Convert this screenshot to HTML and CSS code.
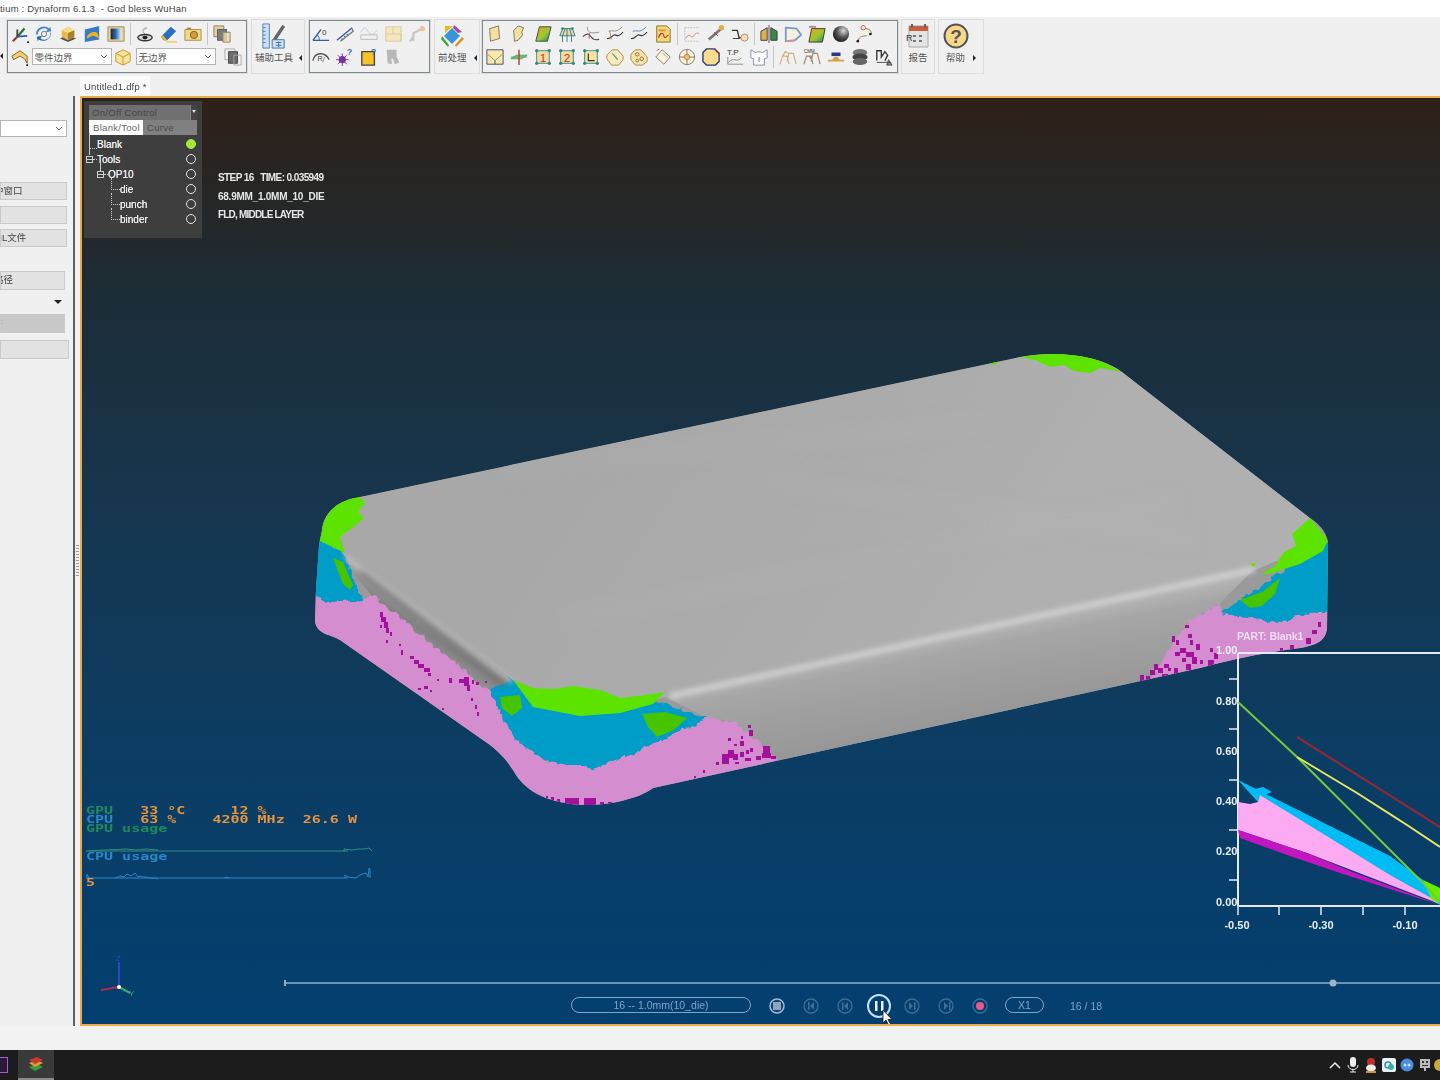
FILE: index.html
```html
<!DOCTYPE html>
<html lang="zh">
<head>
<meta charset="utf-8">
<title>Dynaform 6.1.3</title>
<link rel="stylesheet" href="styles.css">
</head>
<body>
<svg class="defs" width="0" height="0" aria-hidden="true">
<defs>
<linearGradient id="gy" x1="0" y1="0" x2="1" y2="1"><stop offset="0" stop-color="#fff3c0"/><stop offset="1" stop-color="#e8b33c"/></linearGradient>
<linearGradient id="gr" x1="0" y1="0" x2="1" y2="1"><stop offset="0" stop-color="#f5a020"/><stop offset=".55" stop-color="#9ac832"/><stop offset="1" stop-color="#168c50"/></linearGradient>
<linearGradient id="gb" x1="0" y1="0" x2="1" y2="0"><stop offset="0" stop-color="#222"/><stop offset=".5" stop-color="#2a70c0"/><stop offset="1" stop-color="#e8f0f8"/></linearGradient>
<radialGradient id="gs" cx=".65" cy=".3" r=".8"><stop offset="0" stop-color="#ddd"/><stop offset=".5" stop-color="#555"/><stop offset="1" stop-color="#111"/></radialGradient>
<symbol id="axes" viewBox="0 0 20 20"><path d="M7 13 15 4" stroke="#2a6e3c" stroke-width="2.500" fill="none"/><path d="M7 13 2 18" stroke="#b03030" stroke-width="2.500"/><path d="M7 13 18 12" stroke="#2060a8" stroke-width="2"/><path d="M7 13V5" stroke="#444" stroke-width="2"/><path d="M18 18h2v2h-2z" fill="#222"/></symbol>
<symbol id="rot" viewBox="0 0 20 20"><path d="M3 11a7 7 0 0 1 11-6l-2 3 6-1-1-5-1 2A9 9 0 0 0 1 10z" fill="#3f87c6"/><path d="M17 8a7 7 0 0 1-11 7l2-3-6 1 1 5 1-2a9 9 0 0 0 14-7z" fill="#2a6aa8"/><circle cx="10" cy="10" r="3" fill="#e8eef4" stroke="#777"/></symbol>
<symbol id="cube" viewBox="0 0 20 20"><path d="M1 15l9 4 9-4-9-4z" fill="#555"/><path d="M3 6l7-4 7 4v7l-7 4-7-4z" fill="#e8b84a"/><path d="M3 6l7 3 7-3-7-4z" fill="#f7dc8c"/><path d="M10 9v8l7-4V6z" fill="#a9812a"/></symbol>
<symbol id="sheetb" viewBox="0 0 20 20"><path d="M2 5l16-4v15L2 19z" fill="#3a78c8"/><path d="M4 15c1-7 9-9 12-6l2 6-6-3c-3 0-5 2-8 3z" fill="#efb420"/></symbol>
<symbol id="grad" viewBox="0 0 20 20"><path d="M1 2h18v16H1z" fill="#e8d49a" stroke="#9a8a5a"/><path d="M4 4h12v12H4z" fill="url(#gb)"/></symbol>
<symbol id="lamp" viewBox="0 0 20 20"><path d="M10 10C7 8 7 5 10 3" stroke="#999" fill="none"/><path d="M8 6l3-4 2 2z" fill="#bbb"/><ellipse cx="10" cy="14" rx="8" ry="3.500" fill="#ddd" stroke="#333" stroke-width="1.500"/><ellipse cx="10" cy="14" rx="3" ry="2" fill="#222"/></symbol>
<symbol id="eraser" viewBox="0 0 20 20"><path d="M1 13 12 2l6 5-10 10H4z" fill="#2a6fc0"/><path d="M1 13l5 5 2-1-5-6z" fill="#f0c030"/><path d="M7 18h12v1.600H7z" fill="#e8d050"/></symbol>
<symbol id="cam" viewBox="0 0 20 20"><path d="M1 5h18v12H1z" fill="#f2d88a" stroke="#a88a3c"/><path d="M3 3h5v2H3z" fill="#a88a3c"/><circle cx="11" cy="11" r="4" fill="#d0a040" stroke="#7a5a20"/></symbol>
<symbol id="copies" viewBox="0 0 20 20"><path d="M1 1h11v12H1z" fill="#e4d0a0" stroke="#8a7a5a"/><path d="M5 5h10v12H5z" fill="#7c7c7c" stroke="#555"/><path d="M11 8h8v11h-8z" fill="#eeddb0" fill-opacity=".8" stroke="#8a7a5a"/></symbol>
<symbol id="copies2" viewBox="0 0 20 20"><path d="M1 1h11v12H1z" fill="none" stroke="#aaa"/><path d="M5 4h10v13H5z" fill="#6c6c6c" stroke="#444"/><path d="M11 8h8v11h-8z" fill="none" stroke="#aaa"/></symbol>
<symbol id="part" viewBox="0 0 20 20"><path d="M1 9l9-6 8 6v8l-3-5-5-3-7 4z" fill="#f2cf70" stroke="#7a6030"/><path d="M17 18h2v2h-2z" fill="#222"/></symbol>
<symbol id="box" viewBox="0 0 20 20"><path d="M2 6l8-4 8 4v9l-8 4-8-4z" fill="#fbe39c" stroke="#c09530"/><path d="M2 6l8 4 8-4M10 10v9" stroke="#c09530" fill="none"/></symbol>
<symbol id="angle" viewBox="0 0 20 20"><path d="M1 17 10 5M1 17h18" stroke="#2f5ea8" stroke-width="1.500" fill="none"/><path d="M6 11a7 7 0 0 1 2 6" stroke="#2f5ea8" fill="none"/><text x="11" y="11" font-size="9" fill="#333" font-family="Liberation Sans">0</text></symbol>
<symbol id="rule" viewBox="0 0 20 20"><path d="M1 17 18 3" stroke="#2f5ea8" stroke-width="1.500"/><path d="M5 18 19 7l-1-3M6 15l1 1M9 12l1 1M12 10l1 1" stroke="#777" stroke-width="1.500" fill="none"/></symbol>
<symbol id="wave" viewBox="0 0 20 20"><path d="M1 8c3-6 5-6 8-1s6 4 10-1" stroke="#b8c8d8" fill="none"/><path d="M1 11h18v5H1z" fill="none" stroke="#b8b8b8"/></symbol>
<symbol id="panes" viewBox="0 0 20 20"><path d="M2 2h17v16H2z" fill="#f5e6bd" stroke="#d8c8a0"/><path d="M10 2v8H2M10 10h9v8" stroke="#d8c8a0" fill="none"/></symbol>
<symbol id="fax" viewBox="0 0 20 20"><path d="M6 18V9l10-5M6 13 2 18" stroke="#c8c8c0" stroke-width="2.500" fill="none"/><circle cx="16" cy="4" r="3" fill="#f2c0a0"/></symbol>
<symbol id="arc" viewBox="0 0 20 20"><path d="M1 14C3 4 15 4 19 13" fill="none" stroke="#555" stroke-width="1.500"/><text x="6" y="14" font-size="8" fill="#444" font-family="Liberation Sans">R</text><path d="M12 16l2-6" stroke="#888"/></symbol>
<symbol id="star" viewBox="0 0 20 20"><circle cx="7" cy="13" r="4" fill="#7a30a0"/><path d="M7 6v14M0 13h14M2 8l10 10M12 8 2 18" stroke="#7a30a0"/><text x="12" y="8" font-size="10" font-weight="700" fill="#2f6ec0" font-family="Liberation Sans">?</text></symbol>
<symbol id="ysq" viewBox="0 0 20 20"><path d="M2 4h14v15H2z" fill="#f5c228" stroke="#444" stroke-width="1.500"/><text x="12" y="8" font-size="10" font-weight="700" fill="#2f6ec0" font-family="Liberation Sans">?</text></symbol>
<symbol id="gshape" viewBox="0 0 20 20"><path d="M3 2h11v8l3 6-5 2-2-6H8l1 6-5-1z" fill="#b8b8b8"/></symbol>
<symbol id="s1" viewBox="0 0 20 20"><path d="M5 18 4 4l10-3 1 14z" fill="#f3dfa0" stroke="#7a7050"/></symbol>
<symbol id="s2" viewBox="0 0 20 20"><path d="M5 18 4 6l5-5 6 2-2 5 1 3-5 6z" fill="#f3dfa0" stroke="#7a7050"/></symbol>
<symbol id="s3" viewBox="0 0 20 20"><path d="M2 18 6 2h13l-4 16z" fill="url(#gr)" stroke="#345"/></symbol>
<symbol id="mesh" viewBox="0 0 20 20"><path d="M5 4h11l3 8H2z" fill="#e8d8a8" stroke="#2a7a80"/><path d="M5 12v7M10 4v15M15 12v7M8 4 5 12M13 4l2 8" stroke="#2a7a80"/><circle cx="5" cy="4" r="1.500" fill="#2a8a8a"/><circle cx="16" cy="4" r="1.500" fill="#2a8a8a"/></symbol>
<symbol id="c1" viewBox="0 0 20 20"><path d="M6 2c0 6 2 8 13 6" fill="none" stroke="#888"/><path d="M1 13c5-5 7-3 9 0s5 4 9 3" fill="none" stroke="#444" stroke-width="1.300"/><path d="M8 9v6" stroke="#b04040"/></symbol>
<symbol id="c2" viewBox="0 0 20 20"><path d="M3 7c5-2 7 3 15-5" fill="none" stroke="#8a8a8a"/><path d="M1 15c6 1 6-5 9-4s4 2 9-3" fill="none" stroke="#444" stroke-width="1.300"/><path d="M4 6l2 10" stroke="#b09040"/></symbol>
<symbol id="c3" viewBox="0 0 20 20"><path d="M3 7c5-2 7 3 15-5" fill="none" stroke="#5a7aa0"/><path d="M1 15c6 1 6-5 9-4s4 2 9-3" fill="none" stroke="#344" stroke-width="1.300"/></symbol>
<symbol id="doc" viewBox="0 0 20 20"><path d="M3 1h11l4 4v14H3z" fill="#f7d67a" stroke="#8a6a20"/><path d="M5 14c2-6 5-6 6-2s3 1 5-1" stroke="#c03020" fill="none" stroke-width="1.300"/><path d="M5 5h8v2H5z" fill="#e09030"/></symbol>
<symbol id="gr1" viewBox="0 0 20 20"><path d="M2 3h16M2 3v15h16" stroke="#bbb" stroke-dasharray="2 1" fill="none"/><path d="M3 15c4-8 6 0 8-2s4-6 7-3" stroke="#d08060" fill="none"/></symbol>
<symbol id="tool" viewBox="0 0 20 20"><path d="M2 16 16 4" stroke="#777" stroke-width="3"/><circle cx="16" cy="3" r="3" fill="#e0b040"/><path d="M8 8l4 4" stroke="#d02020"/></symbol>
<symbol id="tgt" viewBox="0 0 20 20"><path d="M1 6h6l2 8h8" fill="none" stroke="#333" stroke-width="1.500"/><circle cx="15" cy="14" r="4" fill="#f5deb0" stroke="#a88"/><path d="M2 15h8" stroke="#333"/></symbol>
<symbol id="split" viewBox="0 0 20 20"><path d="M1 7 8 3v14H1z" fill="#e0b040" stroke="#335"/><path d="M12 3l7 4v10h-7z" fill="#3a8a40" stroke="#335"/><path d="M10 0v20" stroke="#444"/></symbol>
<symbol id="outl" viewBox="0 0 20 20"><path d="M2 3l12 1 5 7-7 6-10 1z" fill="#f5f0e0" stroke="#7a9ac8" stroke-width="2"/><path d="M2 18l10-1" stroke="#d89090" stroke-width="2"/></symbol>
<symbol id="gtile" viewBox="0 0 20 20"><path d="M4 4h15l-3 15H1z" fill="url(#gr)" stroke="#333"/><path d="M1 1h8v2H1z" fill="#a88"/></symbol>
<symbol id="sph" viewBox="0 0 20 20"><circle cx="10" cy="10" r="9" fill="url(#gs)"/></symbol>
<symbol id="cn" viewBox="0 0 20 20"><circle cx="8" cy="3" r="2.500" fill="none" stroke="#d06020"/><path d="M10 4c8 0 8 6 5 7M12 12c-6 0-10 2-9 6" fill="none" stroke="#a07030"/><circle cx="2" cy="18" r="1.500" fill="#222"/><circle cx="16" cy="10" r="1.500" fill="#222"/></symbol>
<symbol id="b1" viewBox="0 0 20 20"><path d="M1 2h18v16H1z" fill="#fbe6ae" stroke="#446"/><path d="M2 7l8 7 8-7" stroke="#5a6" fill="none"/><path d="M10 14v4" stroke="#446"/></symbol>
<symbol id="pl" viewBox="0 0 20 20"><path d="M1 12l6-4h12l-6 4z" fill="#d8b060" stroke="#3a6"/><path d="M10 2v17" stroke="#a33" stroke-width="1.500"/><path d="M1 10h18" stroke="#3a6"/></symbol>
<symbol id="n1" viewBox="0 0 20 20"><path d="M3 3h14v14H3z" fill="#f8d8a0" stroke="#2a8a8a"/><text x="10" y="15" text-anchor="middle" font-size="13" fill="#b04020" font-family="Liberation Sans">1</text><circle cx="3" cy="3" r="1.800" fill="#2a8a8a"/><circle cx="17" cy="3" r="1.800" fill="#2a8a8a"/><circle cx="3" cy="17" r="1.800" fill="#2a8a8a"/><circle cx="17" cy="17" r="1.800" fill="#2a8a8a"/></symbol>
<symbol id="n2" viewBox="0 0 20 20"><path d="M3 3h14v14H3z" fill="#f8d8a0" stroke="#2a8a8a"/><text x="10" y="15" text-anchor="middle" font-size="13" fill="#b04020" font-family="Liberation Sans">2</text><circle cx="3" cy="3" r="1.800" fill="#2a8a8a"/><circle cx="17" cy="3" r="1.800" fill="#2a8a8a"/><circle cx="3" cy="17" r="1.800" fill="#2a8a8a"/><circle cx="17" cy="17" r="1.800" fill="#2a8a8a"/></symbol>
<symbol id="sqax" viewBox="0 0 20 20"><path d="M3 3h14v14H3z" fill="#fbe2a0" stroke="#2a8a8a"/><path d="M7 6v8h7" stroke="#333" stroke-width="1.300" fill="none"/><circle cx="3" cy="3" r="1.800" fill="#2a8a8a"/><circle cx="17" cy="3" r="1.800" fill="#2a8a8a"/><circle cx="3" cy="17" r="1.800" fill="#2a8a8a"/><circle cx="17" cy="17" r="1.800" fill="#2a8a8a"/></symbol>
<symbol id="hex" viewBox="0 0 20 20"><path d="M7 2h6l6 7v4l-5 6H6l-5-7V8z" fill="#fbeac0" stroke="#a08a40"/><path d="M7 6l6 7" stroke="#5a8" stroke-width="1.500"/></symbol>
<symbol id="blob" viewBox="0 0 20 20"><path d="M6 2h6l7 8v5l-5 4H6l-5-6V7z" fill="#fbe4a8" stroke="#a08a40"/><circle cx="8" cy="7" r="2" fill="none" stroke="#864"/><circle cx="13" cy="12" r="2" fill="none" stroke="#864"/><circle cx="8" cy="14" r="1.500" fill="none" stroke="#864"/></symbol>
<symbol id="dia" viewBox="0 0 20 20"><path d="M9 2l9 8-7 8-9-8z" fill="#fdf3d8" stroke="#777"/><path d="M10 6l5 5" stroke="#2a7" stroke-dasharray="2 1"/><path d="M3 3l3-2" stroke="#c44"/></symbol>
<symbol id="cir" viewBox="0 0 20 20"><circle cx="10" cy="10" r="8.500" fill="#fdf3d8" stroke="#777"/><circle cx="10" cy="10" r="3" fill="#f0c060" stroke="#a86"/><path d="M2 10h5M13 10h5M10 2v5M10 13v5" stroke="#a55"/></symbol>
<symbol id="rsq" viewBox="0 0 20 20"><path d="M5 1h9l5 5v9l-4 4H5l-4-4V5z" fill="#fbdc8c" stroke="#223a80" stroke-width="1.500"/><path d="M14 1l5 5" stroke="#a03030" stroke-width="1.500"/></symbol>
<symbol id="tp" viewBox="0 0 20 20"><text x="1" y="8" font-size="9" fill="#333" font-family="Liberation Sans">T.P</text><path d="M2 10v8h17M3 16c5-7 9 1 14-5" stroke="#888" fill="none"/></symbol>
<symbol id="shi" viewBox="0 0 20 20"><path d="M1 2l5 3 4-1 4 1 5-3v9l-3 1v7H4v-7l-3-1z" fill="#fff" stroke="#7a8aa8"/><text x="10" y="16" text-anchor="middle" font-size="8" fill="#444" font-family="Liberation Sans">I</text></symbol>
<symbol id="fstr" viewBox="0 0 20 20"><path d="M1 18 4 9h5l2 9M9 15l2-9h5l3 12M4 9l3-5 4 2" fill="none" stroke="#d0b080" stroke-width="1.300"/></symbol>
<symbol id="cmm" viewBox="0 0 20 20"><text x="1" y="5" font-size="5" fill="#333" font-family="Liberation Sans">CMM</text><path d="M1 18 4 9h5l2 9M9 15l2-9h5l3 12M4 9l3 0 4 6" fill="none" stroke="#a08a70" stroke-width="1.300"/></symbol>
<symbol id="pun" viewBox="0 0 20 20"><path d="M5 5h10v4H5z" fill="#2a3a88"/><path d="M1 13h5l2-3h4l2 3h5v2H1z" fill="#d8a040"/></symbol>
<symbol id="disk" viewBox="0 0 20 20"><ellipse cx="10" cy="5" rx="8" ry="4" fill="#777"/><ellipse cx="10" cy="10" rx="8.500" ry="4" fill="#444"/><ellipse cx="10" cy="15" rx="8" ry="4" fill="#666"/></symbol>
<symbol id="fin" viewBox="0 0 20 20"><path d="M2 14V3h5v7l4-6 3 4-3 6" fill="none" stroke="#333" stroke-width="1.500"/><path d="M2 16h16M13 19l2-6 4 6z" fill="#888" stroke="#444"/></symbol>
</defs>
</svg>

<div class="app">
  <header class="title">tium : Dynaform 6.1.3&nbsp; - God bless WuHan</header>

  <div class="toolbar">
    <div class="edge"><span class="arr-l"></span></div>
    <div class="box box1">
      <div class="row">
        <svg class="ic"><use href="#axes"/></svg><svg class="ic"><use href="#rot"/></svg><svg class="ic"><use href="#cube"/></svg><svg class="ic"><use href="#sheetb"/></svg><svg class="ic"><use href="#grad"/></svg>
        <i class="sep"></i>
        <svg class="ic"><use href="#lamp"/></svg><svg class="ic"><use href="#eraser"/></svg><svg class="ic"><use href="#cam"/></svg>
        <i class="sep"></i>
        <svg class="ic"><use href="#copies"/></svg>
      </div>
      <div class="row row-combo">
        <svg class="ic ic-first"><use href="#part"/></svg>
        <div class="combo"><span>零件边界</span><svg class="chev" viewBox="0 0 8 5"><path d="M1 1l3 3 3-3" fill="none" stroke="#666"/></svg></div>
        <svg class="ic ic-mid"><use href="#box"/></svg>
        <div class="combo"><span>无边界</span><svg class="chev" viewBox="0 0 8 5"><path d="M1 1l3 3 3-3" fill="none" stroke="#666"/></svg></div>
        <svg class="ic ic-end"><use href="#copies2"/></svg>
      </div>
    </div>

    <div class="big big-aux">
      <svg class="bigic" viewBox="0 0 26 28"><path d="M1 1h7v26H1z" fill="#cfe0f0" stroke="#4a80b8"/><path d="M1 5h3M1 9h3M1 13h3M1 17h3M1 21h3" stroke="#4a80b8"/><path d="M12 17 22 2l3 2-10 15z" fill="#666"/><path d="M11 18h13v9H11z" fill="#cfe0f0" stroke="#3a70a8"/><path d="M15 21h6M15 24h6M18 20v6" stroke="#3a70a8"/></svg>
      <div class="biglabel"><span>辅助工具</span><span class="arr-l"></span></div>
    </div>

    <div class="box box3">
      <div class="row">
        <svg class="ic"><use href="#angle"/></svg><svg class="ic"><use href="#rule"/></svg><svg class="ic"><use href="#wave"/></svg><svg class="ic"><use href="#panes"/></svg><svg class="ic"><use href="#fax"/></svg>
      </div>
      <div class="row">
        <svg class="ic"><use href="#arc"/></svg><svg class="ic"><use href="#star"/></svg><svg class="ic"><use href="#ysq"/></svg><svg class="ic"><use href="#gshape"/></svg>
      </div>
    </div>

    <div class="big big-pre">
      <svg class="bigic" viewBox="0 0 26 26"><path d="M13 5l8 8-8 8-8-8z" fill="#3a96d8"/><path d="M6 3h8L6 10z" fill="#e0c020"/><path d="M15 2l8 7-4 1-5-5z" fill="#b040a8"/><path d="M3 13l7 9-1 2-7-8z" fill="#38a838"/><path d="M23 14l-7 8 1 2 8-8z" fill="#e09020"/></svg>
      <div class="biglabel"><span>前处理</span><span class="arr-l"></span></div>
    </div>

    <div class="box box5">
      <div class="row">
        <svg class="ic"><use href="#s1"/></svg><svg class="ic"><use href="#s2"/></svg><svg class="ic"><use href="#s3"/></svg><svg class="ic"><use href="#mesh"/></svg><svg class="ic"><use href="#c1"/></svg><svg class="ic"><use href="#c2"/></svg><svg class="ic"><use href="#c3"/></svg><svg class="ic"><use href="#doc"/></svg>
        <i class="sep"></i>
        <svg class="ic"><use href="#gr1"/></svg><svg class="ic"><use href="#tool"/></svg><svg class="ic"><use href="#tgt"/></svg>
        <i class="sep"></i>
        <svg class="ic"><use href="#split"/></svg><svg class="ic"><use href="#outl"/></svg><svg class="ic"><use href="#gtile"/></svg><svg class="ic"><use href="#sph"/></svg><svg class="ic"><use href="#cn"/></svg>
      </div>
      <div class="row">
        <svg class="ic"><use href="#b1"/></svg><svg class="ic"><use href="#pl"/></svg><svg class="ic"><use href="#n1"/></svg><svg class="ic"><use href="#n2"/></svg><svg class="ic"><use href="#sqax"/></svg><svg class="ic"><use href="#hex"/></svg><svg class="ic"><use href="#blob"/></svg><svg class="ic"><use href="#dia"/></svg><svg class="ic"><use href="#cir"/></svg><svg class="ic"><use href="#rsq"/></svg><svg class="ic"><use href="#tp"/></svg><svg class="ic"><use href="#shi"/></svg>
        <i class="sep"></i>
        <svg class="ic"><use href="#fstr"/></svg><svg class="ic"><use href="#cmm"/></svg><svg class="ic"><use href="#pun"/></svg><svg class="ic"><use href="#disk"/></svg><svg class="ic"><use href="#fin"/></svg>
      </div>
    </div>

    <div class="big big-rep">
      <svg class="bigic" viewBox="0 0 24 26"><path d="M3 3h19v21H3z" fill="#e4e4e4" stroke="#aaa"/><path d="M3 3h19v5H3z" fill="#c86040"/><path d="M6 1v4M19 1v4" stroke="#666" stroke-width="2"/><path d="M7 12h3v2H7zM13 12h3v2h-3zM7 17h3v2H7zM13 17h3v2h-3z" fill="#777"/><text x="0" y="18" font-size="9" fill="#333" font-family="Liberation Sans">R</text></svg>
      <div class="biglabel"><span>报告</span></div>
    </div>
    <div class="big big-help">
      <svg class="bigic" viewBox="0 0 26 26"><circle cx="13" cy="13" r="11.500" fill="#f8d78a" stroke="#555" stroke-width="2"/><text x="13" y="20" text-anchor="middle" font-size="19" font-weight="700" fill="#555" font-family="Liberation Sans">?</text></svg>
      <div class="biglabel"><span>帮助</span><span class="arr-r"></span></div>
    </div>
  </div>

  <nav class="tabs"><div class="tab">Untitled1.dfp *</div></nav>

  <main class="main">
    <aside class="side">
      <div class="combo combo-side"><svg class="chev" viewBox="0 0 8 5"><path d="M1 1l3 3 3-3" fill="none" stroke="#666"/></svg></div>
      <div class="btn b1"><span class="cut">中窗口</span></div>
      <div class="btn b2"></div>
      <div class="btn b3"><span class="cut">ML文件</span></div>
      <div class="btn b4"><span class="cut">路径</span></div>
      <div class="drop"><span class="arr-d"></span></div>
      <div class="btn b5"><span class="cut faint">件</span></div>
      <div class="btn b6"></div>
    </aside>
    <div class="split"><i></i></div>

    <section class="view">
      <svg class="scene" viewBox="80 96 1360 930" preserveAspectRatio="none">
        <defs>
          <clipPath id="bodyclip"><path id="bodyp" d="M322 530C324 512 338 500 360 497L1020 357C1055 350 1100 355 1122 372L1310 518C1322 526 1329 535 1328 548L1327 628C1326 640 1318 645 1300 648C1270 652 1235 658 1200 668L653 788C640 798 610 806 580 805C550 802 532 795 518 778C510 765 505 757 490 745L340 640C330 634 318 635 315 622L316 590L319 545Z"/></clipPath>
          <filter id="jag" x="-5%" y="-5%" width="110%" height="110%"><feTurbulence type="fractalNoise" baseFrequency=".14" numOctaves="2" seed="4"/><feDisplacementMap in="SourceGraphic" scale="9" xChannelSelector="R" yChannelSelector="G"/></filter>
          <filter id="soft"><feGaussianBlur stdDeviation="2.500"/></filter>
          <filter id="soft2"><feGaussianBlur stdDeviation="6"/></filter>
          <linearGradient id="front" gradientUnits="userSpaceOnUse" x1="900" y1="640" x2="918" y2="730"><stop offset="0" stop-color="#b8b8b8"/><stop offset=".25" stop-color="#a6a6a6"/><stop offset="1" stop-color="#979797"/></linearGradient>
          <linearGradient id="top" gradientUnits="userSpaceOnUse" x1="600" y1="400" x2="950" y2="640"><stop offset="0" stop-color="#a8a8a8"/><stop offset=".7" stop-color="#acacac"/><stop offset="1" stop-color="#b0b0b0"/></linearGradient>
          <linearGradient id="lside" gradientUnits="userSpaceOnUse" x1="440" y1="620" x2="420" y2="650"><stop offset="0" stop-color="#adadad"/><stop offset=".5" stop-color="#828282"/><stop offset="1" stop-color="#939393"/></linearGradient>
        </defs>

        <g clip-path="url(#bodyclip)">
          <rect x="300" y="340" width="1040" height="480" fill="#9a9a9a"/>
          <path d="M665 697 1255 568 1220 603 1187 623 1143 690 778 762 735 722 708 718Z" fill="url(#front)"/>
          <path d="M343 553 513 680 490 695 373 597 355 575Z" fill="url(#lside)"/>
          <path d="M310 585 330 603 363 600 373 595 490 692 513 737 543 760 593 770 633 753 683 730 708 718 735 722 778 760 670 830 570 840 470 800 295 660Z" fill="#d48ed0" filter="url(#jag)"/>
          <path d="M1130 710 1187 623 1220 603 1222 613 1240 617 1280 623 1293 617 1345 606 1345 665 1200 700Z" fill="#d48ed0" filter="url(#jag)"/>
          <path d="M305 530 343 553 363 600 330 603 302 590Z" fill="#009dc8" filter="url(#jag)"/>
          <path d="M490 692 513 675 653 700 708 718 683 730 633 753 593 770 543 760 513 737Z" fill="#009dc8" filter="url(#jag)"/>
          <path d="M1222 613 1240 600 1277 575 1323 545 1345 535 1345 606 1293 617 1280 623 1240 617Z" fill="#009dc8" filter="url(#jag)"/>
          <path d="M333 558 343 562 353 585 350 590 343 584Z" fill="#46c400"/>
          <path d="M500 697 520 695 522 708 512 716 502 708Z" fill="#46c400"/>
          <path d="M642 714 665 712 687 718 674 730 657 737 648 727Z" fill="#46c400"/>
          <path d="M1280 578 1262 592 1240 600 1250 608 1262 606 1275 594Z" fill="#46c400"/>

          <path d="M322 530C324 512 338 500 360 497L1020 357C1055 350 1100 355 1122 372L1310 518 1328 540 1255 570 665 697C620 712 560 712 513 680L343 553Z" fill="url(#top)"/>
          <path d="M670 696 1255 569" stroke="#cfcfcf" stroke-width="6" filter="url(#soft)"/>
          <path d="M345 556 512 682" stroke="#bdbdbd" stroke-width="4" filter="url(#soft)"/>
          <path d="M360 572 505 685" stroke="#707070" stroke-width="8" filter="url(#soft)" opacity=".45"/>
          <path d="M500 470 1000 420M560 620 1180 500M760 480 1200 540" stroke="#bbb" stroke-width="26" opacity=".1" filter="url(#soft2)"/>

          <path d="M318 540 322 530C324 512 338 500 360 497L365 503 358 512 364 518 352 528 340 537 345 553Z" fill="#5ce400"/>
          <path d="M513 680 533 688 555 689 573 686 600 690 620 698 645 695 665 692 653 704 620 713 580 716 533 707Z" fill="#5ce400"/>
          <path d="M1262 574 1275 566 1284 552 1296 546 1292 534 1310 518 1328 540 1323 551 1300 564 1268 574Z" fill="#5ce400"/>
          <path d="M1020 357 1060 352 1095 358 1122 372 1100 368 1090 373 1074 371 1064 365 1050 367 1035 360Z" fill="#5ce400"/>
          <path d="M985 362 1000 360 995 365Z" fill="#5ce400"/>
          <path d="M1250 564 1256 563 1254 567Z" fill="#5ce400"/>

          <path fill="#a3109c" d="M380 612h3v5h-3zM381 617h5v5h-5zM384 622h4v6h-4zM386 628h3v5h-3zM390 632h2v4h-2zM380 625h2v3h-2zM386 640h2v3h-2zM399 644h2v2h-2zM401 650h2v5h-2zM410 656h4v3h-4zM414 660h5v4h-5zM418 664h6v4h-6zM424 668h6v4h-6zM428 673h3v3h-3zM437 679h2v2h-2zM449 678h3v5h-3zM459 679h5v4h-5zM464 677h5v9h-5zM467 685h3v6h-3zM472 680h2v4h-2zM476 682h3v3h-3zM485 681h2v2h-2zM418 688h3v2h-3zM424 686h4v3h-4zM430 690h2v2h-2zM471 698h2v3h-2zM475 705h2v4h-2zM477 712h2v4h-2zM442 708h2v2h-2z"/>
          <path fill="#a3109c" d="M551 797h3v3h-3zM557 799h3v5h-3zM565 798h14v8h-14zM584 798h12v8h-12zM600 802h4v3h-4zM608 802h4v3h-4zM546 796h2v2h-2zM728 738h3v3h-3zM748 725h3v3h-3zM749 730h4v6h-4zM741 736h2v3h-2zM740 741h4v5h-4zM734 744h3v2h-3zM722 754h7v10h-7zM728 750h6v8h-6zM733 754h5v6h-5zM740 752h4v5h-4zM746 750h3v4h-3zM750 748h3v4h-3zM763 746h7v8h-7zM762 753h9v5h-9zM756 756h5v4h-5zM745 758h6v3h-6zM735 762h4v2h-4zM771 756h5v3h-5zM716 762h3v3h-3zM703 770h2v3h-2zM694 776h2v2h-2z"/>
          <path fill="#a3109c" d="M1185 625h4v3h-4zM1172 636h3v6h-3zM1176 640h3v5h-3zM1188 634h4v4h-4zM1190 640h3v5h-3zM1196 644h4v6h-4zM1180 648h6v5h-6zM1186 652h8v5h-8zM1192 657h5v7h-5zM1175 652h5v4h-5zM1182 658h4v4h-4zM1186 664h5v6h-5zM1210 648h3v4h-3zM1214 653h4v6h-4zM1200 660h3v4h-3zM1208 660h6v6h-6zM1154 664h4v6h-4zM1150 670h5v5h-5zM1146 676h4v5h-4zM1158 668h5v5h-5zM1164 664h5v4h-5zM1168 668h3v3h-3zM1174 668h4v6h-4zM1162 674h6v3h-6zM1318 622h3v5h-3zM1312 630h5v4h-5zM1306 638h5v6h-5zM1290 645h4v4h-4zM1280 648h3v3h-3z"/>
          <path fill="#a3109c" d="M1140 675h4v6h-4z"/>
        </g>

        <g class="hudlines">
          <path d="M86 851h262" stroke="#2d8f7a" stroke-width="1" fill="none"/>
          <path d="M88 851l8-.5 8-.5 12-.5 10-.5 10 1 10-1 12 1M344 852v-3l8 1 6-1 6 0 5-1 3 3" stroke="#2d8f7a" stroke-width="1" fill="none"/>
          <path d="M86 878h262" stroke="#2a87c8" stroke-width="1" fill="none"/>
          <path d="M87 878v-4l2 4M115 878l5-2 4 1 3-3 4 2 4-3 3 4 3-1 2 1 3 0 4 1 4 0 4 1M224 878l3-1 2 1M345 878v-3l3 2 8 1 4-3 6-2 2 4 1-9 1 1v9" stroke="#2a87c8" stroke-width="1" fill="none"/>
        </g>

        <g class="triad">
          <path d="M119 987V962" stroke="#2a48c0" stroke-width="2"/>
          <path d="M119 987 101 990" stroke="#b02c4c" stroke-width="2"/>
          <path d="M119 987 130 993" stroke="#2fb06a" stroke-width="2"/>
          <circle cx="119" cy="987" r="2" fill="#fff"/>
          <text x="116" y="961" font-size="8" fill="#2a48c0" font-family="Liberation Sans">Z</text>
          <text x="129" y="996" font-size="8" fill="#2fb06a" font-family="Liberation Sans">Y</text>
        </g>

        <g class="chart">
          <path d="M1238 653H1440M1238 653V906M1238 906H1440" stroke="#e8e8f0" stroke-width="2" fill="none"/>
          <path d="M1229 679h9M1229 729h9M1229 780h9M1229 830h9M1229 880h9" stroke="#e8e8f0" stroke-width="1.500"/>
          <path d="M1238 906v9M1279 906v9M1321 906v9M1363 906v9M1405 906v9" stroke="#e8e8f0" stroke-width="1.500"/>
          <path d="M1238 780 1258 790 1390 856 1423 880 1440 898 1440 905 1300 830 1258 802Z" fill="#00bcf5"/>
          <path d="M1255 789 1263 787 1272 792 1262 796Z" fill="#00bcf5"/>
          <path d="M1238 802 1250 804 1258 802 1260 795 1390 875 1433 899 1440 904 1307 853 1238 830Z" fill="#fcaaf2"/>
          <path d="M1238 830 1307 853 1350 871 1440 905 1340 873 1290 856 1240 838Z" fill="#c416c0"/>
          <path d="M1423 880 1440 888V903L1432 900Z" fill="#66f000"/>
          <path d="M1238 702 1297 757 1423 883 1440 902" stroke="#74c93c" stroke-width="2" fill="none"/>
          <path d="M1297 757 1357 793 1407 825 1440 847" stroke="#e8e860" stroke-width="2" fill="none"/>
          <path d="M1297 737 1440 827" stroke="#8a2a3a" stroke-width="2.200" fill="none"/>
        </g>

        <g class="ctrl">
          <path d="M285 983H1440" stroke="#8fb0c8" stroke-width="1.500"/>
          <path d="M285 980v6" stroke="#8fb0c8" stroke-width="2"/>
          <circle cx="1333" cy="983" r="3.500" fill="#9ab4c8"/>
          <circle cx="777" cy="1006" r="7" fill="#0a4678" stroke="#a0bcd4" stroke-width="1.500"/><rect x="773" y="1002" width="8" height="8" fill="#8ea4b8"/>
          <g fill="none" stroke="#3d6f96" stroke-width="1.300">
            <circle cx="811" cy="1006" r="7"/><circle cx="845" cy="1006" r="7"/><circle cx="912" cy="1006" r="7"/><circle cx="946" cy="1006" r="7"/><circle cx="980" cy="1006" r="7"/>
          </g>
          <path d="M808 1002h1.500v8H808zM814 1002v8l-4-4zM848 1002v8l-4-4zM842 1002h1.500v8H842zM909 1002v8l4-4zM914 1002h1.500v8H914zM944 1002v8l4-4zM949 1002h1.500v8H949z" fill="#3d6f96"/>
          <circle cx="980" cy="1006" r="4" fill="#e85c8c"/>
          <circle cx="879" cy="1006" r="11" fill="none" stroke="#c8e0f4" stroke-width="2"/>
          <path d="M875 1001h2.500v10H875zM881 1001h2.500v10H881z" fill="#e8f0f8"/>
          <path d="M883 1010v13l3-3 2.500 5 2-1-2.500-4.500h4z" fill="#fff" stroke="#111" stroke-width=".8"/>
        </g>
      </svg>

      <div class="tree">
        <div class="onoff"><span>On/Off Control</span><b></b></div>
        <div class="ttabs"><span class="on">Blank/Tool</span><span class="off">Curve</span></div>
        <ul class="rows">
          <li class="l0"><span>Blank</span><i class="dot lit"></i></li>
          <li class="l0"><em></em><span>Tools</span><i class="dot"></i></li>
          <li class="l1"><em></em><span>OP10</span><i class="dot"></i></li>
          <li class="l2"><span>die</span><i class="dot"></i></li>
          <li class="l2"><span>punch</span><i class="dot"></i></li>
          <li class="l2"><span>binder</span><i class="dot"></i></li>
        </ul>
      </div>

      <div class="info">
        <p>STEP 16 &nbsp; TIME: 0.035949</p>
        <p>68.9MM_1.0MM_10_DIE</p>
        <p>FLD, MIDDLE LAYER</p>
      </div>

      <div class="part">PART: Blank1</div>
      <span class="yl y100">1.00</span><span class="yl y80">0.80</span><span class="yl y60">0.60</span><span class="yl y40">0.40</span><span class="yl y20">0.20</span><span class="yl y0">0.00</span>
      <span class="xl x50">-0.50</span><span class="xl x30">-0.30</span><span class="xl x10">-0.10</span>

      <pre class="hud"><span class="g">GPU</span><span class="o">   33 °C     12 %</span>
<span class="b">CPU</span><span class="o">   63 %    4200 MHz  26.6 W</span>
<span class="g">GPU usage</span></pre>
      <pre class="hud hud2"><span class="b">CPU usage</span></pre>
      <pre class="hud hud3"><span class="o">5</span></pre>

      <div class="pill pill-step">16 -- 1.0mm(10_die)</div>
      <div class="pill pill-speed">X1</div>
      <div class="count">16 / 18</div>
    </section>
  </main>

  <div class="status"></div>

  <footer class="taskbar">
    <div class="tb-app"></div>
    <div class="tb-active">
      <svg viewBox="0 0 18 18" width="18" height="18"><path d="M2 12l8-3 6 3-8 4z" fill="#3a9a48"/><path d="M2 8l8-3 6 3-8 4z" fill="#d8a030"/><path d="M2 5l8-3 6 3-8 4z" fill="#c83a30"/></svg>
    </div>
    <div class="tray">
      <svg class="t-ch" viewBox="0 0 12 8" height="8"><path d="M1 7l5-5 5 5" fill="none" stroke="#eee" stroke-width="1.500"/></svg>
      <svg viewBox="0 0 12 16" height="16"><rect x="3" y="0" width="6" height="10" rx="3" fill="#eee"/><path d="M1 8c0 6 10 6 10 0M6 12v3M3 15h6" stroke="#eee" fill="none"/></svg>
      <svg viewBox="0 0 14 16" height="16"><ellipse cx="7" cy="5" rx="4" ry="4" fill="#c03028"/><ellipse cx="7" cy="11" rx="5" ry="3.500" fill="#eee"/><path d="M2 14h10v2H2z" fill="#d89030"/></svg>
      <svg viewBox="0 0 14 14" height="14"><rect width="14" height="14" rx="2" fill="#e8f4f8"/><circle cx="6" cy="7" r="3" fill="none" stroke="#3a8aa8" stroke-width="1.500"/><circle cx="9" cy="9" r="3" fill="#3ab0a0"/></svg>
      <svg viewBox="0 0 14 14" height="14"><circle cx="7" cy="7" r="6.500" fill="#4a8ce0"/><circle cx="5" cy="7" r="1.500" fill="#c8e0f8"/><circle cx="9" cy="7" r="1.500" fill="#c8e0f8"/></svg>
      <svg viewBox="0 0 12 14" height="14"><path d="M1 1h10v9H7v3H5v-3H1z" fill="#bbb"/><path d="M3 3h2v2H3zM7 3h2v2H7zM3 7h6v1H3z" fill="#333"/></svg>
      <span class="tray-end"></span>
    </div>
  </footer>
</div>
</body>
</html>
```
FILE: styles.css
```css
* { box-sizing: border-box; }
html, body { margin: 0; padding: 0; height: 100%; overflow: hidden; background: #f0f0f0; }
body { font-family: "Liberation Sans", "Noto Sans CJK SC", sans-serif; color: #333; }
.defs { position: absolute; }
.app { display: flex; flex-direction: column; width: 1440px; height: 1080px; overflow: hidden; filter: blur(.35px); }

.title { height: 17px; background: #fff; font-size: 9.5px; line-height: 17px; color: #444; letter-spacing: .2px; white-space: nowrap; }

.toolbar { height: 59px; background: #f0f0f0; display: flex; align-items: center; }
.edge { width: 7px; height: 52px; display: flex; align-items: flex-end; padding-bottom: 14px; }
.arr-l { width: 0; height: 0; border: 3px solid transparent; border-left: 0; border-right: 3px solid #222; display: inline-block; flex: none; }
.arr-r { width: 0; height: 0; border: 3px solid transparent; border-right: 0; border-left: 3px solid #222; display: inline-block; flex: none; }
.arr-d { width: 0; height: 0; border: 4px solid transparent; border-bottom: 0; border-top: 4px solid #222; display: inline-block; }

.box { height: 53px; border: 1.5px solid #7f8a90; display: flex; flex-direction: column; gap: 1px; padding-top: 1.5px; background: #f0f0f0; box-shadow: 0 0 0 1px #dcdcdc; }
.row { display: flex; align-items: center; gap: 6px; height: 22px; }
.ic { width: 18px; height: 18px; flex: none; display: block; }
.sep { width: 1px; height: 22px; background: #c4c4c4; flex: none; display: block; margin: 0 -1px; }
.box1 { width: 240px; padding-left: 2.5px; }
.box3 { width: 121px; margin-left: 4px; padding-left: 1.5px; }
.box5 { width: 416px; margin-left: 2px; padding-left: 2.5px; }
.row-combo { gap: 2px; }
.ic-first { margin-right: 1px; }
.ic-mid { margin-right: 2px; }
.ic-end { margin-left: 6px; }
.combo { width: 80px; height: 17px; background: #fff; border: 1px solid #b4b4b4; display: flex; align-items: center; justify-content: space-between; font-size: 9.5px; color: #555; padding: 0 3px 0 2px; flex: none; }
.chev { width: 8px; height: 5px; display: block; }

.big { height: 55px; border: 1px solid #dcdcdc; display: flex; flex-direction: column; align-items: flex-start; gap: 2px; padding-top: 3px; }
.bigic { width: 26px; height: 26px; display: block; flex: none; }
.biglabel { display: flex; align-items: center; font-size: 9.5px; color: #555; line-height: 12px; height: 13px; white-space: nowrap; }
.big-aux { width: 54px; margin-left: 4px; padding-left: 3px; }
.big-aux .bigic { margin-left: 6px; }
.big-aux .biglabel { gap: 6px; }
.big-pre { width: 46px; margin-left: 4px; padding-left: 3px; }
.big-pre .bigic { margin-left: 1px; }
.big-pre .biglabel { gap: 7px; }
.big-rep { width: 34px; margin-left: 3px; align-items: center; }
.big-help { width: 46px; margin-left: 3px; padding-left: 7px; }
.big-help .bigic { margin-left: -3px; }
.big-help .biglabel { gap: 8px; }

.tabs { height: 20px; background: #f0f0f0; display: flex; padding-left: 80px; }
.tab { width: 70px; height: 20px; background: #fafafa; font-size: 9.5px; line-height: 21px; padding-left: 4px; color: #444; letter-spacing: .2px; }

.main { flex: 1; display: flex; min-height: 0; }
.side { width: 75px; background: #f0f0f0; border-right: 2px solid #5a6068; display: flex; flex-direction: column; align-items: flex-start; padding-top: 24px; }
.combo-side { width: 67px; justify-content: flex-end; }
.btn { height: 18px; background: #e2e2e2; border: 1px solid #cacaca; font-size: 9.5px; line-height: 16px; color: #444; overflow: hidden; white-space: nowrap; }
.cut { display: block; margin-left: -7px; }
.b1 { width: 67px; margin-top: 45px; }
.b2 { width: 67px; margin-top: 6px; }
.b3 { width: 67px; margin-top: 5px; }
.b4 { width: 65px; margin-top: 24px; height: 19px; }
.drop { width: 65px; height: 24px; display: flex; justify-content: flex-end; align-items: center; padding-right: 3px; }
.b5 { width: 65px; height: 19px; background: #c8c8c8; margin-top: 0; }
.faint { color: #a8a8a8; margin-left: -8px; }
.b6 { width: 69px; height: 19px; margin-top: 7px; }
.split { width: 5px; background: #f0f0f0; display: flex; align-items: center; justify-content: center; }
.split i { display: block; width: 3px; height: 32px; background: repeating-linear-gradient(#999 0 1px, transparent 1px 3px); }

.view { position: relative; flex: 1; height: 930px; overflow: hidden; border-top: 2px solid #e8ac48; border-bottom: 2px solid #e8ac48; box-shadow: inset 2px 0 0 #e8ac48; background: linear-gradient(180deg, #2e2018 0, #23282a 14%, #1c2d38 22%, #16364f 45%, #0c3d63 70%, #033f70 100%); }
.scene { position: absolute; left: 0; top: -2px; width: 1360px; height: 930px; display: block; }

.tree { position: absolute; left: 4px; top: 3px; width: 118px; height: 137px; background: #3e3e3e; padding: 4px 5px; color: #eee; font-size: 10px; }
.onoff { height: 15px; background: #707070; display: flex; justify-content: space-between; font-size: 9.5px; line-height: 16px; color: #454545; padding-left: 3px; letter-spacing: .3px; }
.onoff b { width: 7px; background: #444; border-left: 1px solid #888; }
.onoff b::after { content: ""; display: block; width: 0; height: 0; margin: 5px 1px; border: 2px solid transparent; border-bottom: 0; border-top: 3px solid #ddd; }
.ttabs { display: flex; height: 15px; font-size: 9.5px; line-height: 16px; letter-spacing: .3px; }
.ttabs span { padding-left: 4px; }
.ttabs .on { width: 54px; background: #fff; color: #666; }
.ttabs .off { flex: 1; background: #808080; color: #4c4c4c; }
.rows { list-style: none; margin: 2px 0 0; padding: 0; }
.rows li { height: 15px; display: flex; align-items: center; position: relative; line-height: 15px; }
.rows li span { flex: 1; text-shadow: 0 0 .4px #eee; }
.rows em { display: block; position: absolute; top: 4px; width: 7px; height: 7px; border: 1px solid #ccc; background: linear-gradient(#ccc, #ccc) center / 5px 1px no-repeat; }
.l0 { padding-left: 8px; }
.l0 em { left: -3px; }
.l1 { padding-left: 19px; }
.l1 em { left: 8px; }
.l1::before { content: ""; position: absolute; left: 11px; top: -4px; height: 8px; border-left: 1px solid #ccc; }
.l1::after, .l0:nth-child(2)::after { content: ""; position: absolute; top: 7px; width: 4px; border-top: 1px dotted #ccc; }
.l1::after { left: 15px; }
.l0:nth-child(2)::after { left: 4px; }
.l2 { padding-left: 31px; }
.l2::before { content: ""; position: absolute; left: 22px; top: -4px; bottom: 7px; width: 8px; border-left: 1px dotted #ccc; border-bottom: 1px dotted #ccc; }
.l0:first-child::before { content: ""; position: absolute; left: 0; top: -4px; height: 15px; width: 7px; border-left: 1px solid #ccc; border-bottom: 1px dotted #ccc; }
.l0:first-child::after { content: ""; position: absolute; left: 0; top: 10px; height: 8px; border-left: 1px solid #ccc; }
.dot { width: 10px; height: 10px; border-radius: 50%; border: 1.5px solid #e4e4e4; margin: -2px 1px 0 0; flex: none; display: block; }
.dot.lit { background: #a4ea3c; border-color: #a4ea3c; }

.info { position: absolute; left: 138px; top: 71px; color: #e8e8e8; font-size: 10px; font-weight: 700; }
.info p { margin: 0; height: 18.5px; line-height: 18.5px; white-space: pre; letter-spacing: -.6px; }
.info p:nth-child(2) { letter-spacing: -.25px; }
.info p:nth-child(3) { letter-spacing: -.8px; }

.part { position: absolute; left: 1157px; top: 532px; color: #eedcf0; font-size: 10.5px; font-weight: 700; letter-spacing: -.1px; }
.yl, .xl { position: absolute; color: #e8eef4; font-size: 11px; font-weight: 700; line-height: 12px; }
.yl { left: 1136px; }
.y100 { top: 546px; }
.y80 { top: 597px; }
.y60 { top: 647px; }
.y40 { top: 697px; }
.y20 { top: 747px; }
.y0 { top: 798px; }
.xl { top: 821px; width: 40px; text-align: center; }
.x50 { left: 1137px; }
.x30 { left: 1221px; }
.x10 { left: 1305px; }

.hud { position: absolute; left: 6px; top: 709px; margin: 0; font-family: "DejaVu Sans Mono", monospace; font-size: 15px; font-weight: 700; line-height: 13px; transform: scaleY(.68); transform-origin: 0 0; white-space: pre; }
.hud2 { top: 755px; }
.hud3 { top: 781px; }
.hud .g { color: #1f8a5c; }
.hud .b { color: #2a87c8; }
.hud .o { color: #e8943c; }

.pill { position: absolute; height: 16px; border: 1.5px solid #7fa4c4; border-radius: 8px; color: #7fa4c4; font-size: 10.5px; line-height: 15px; text-align: center; }
.pill-step { left: 491px; top: 899px; width: 180px; }
.pill-speed { left: 925px; top: 899px; width: 39px; }
.count { position: absolute; left: 990px; top: 902px; color: #7fa4c4; font-size: 10.5px; line-height: 13px; }

.status { height: 24px; background: #f2f2f2; }
.taskbar { height: 30px; background: #1c1c1c; display: flex; align-items: stretch; }
.tb-app { width: 8px; margin: 7px 0; border: 1.5px solid #a060d8; border-left: 0; background: #2a1a3a; }
.tb-active { width: 36px; margin-left: 10px; background: #3a3a3a; border-bottom: 2px solid #8a8a8a; display: flex; align-items: center; justify-content: center; }
.tray { margin-left: auto; display: flex; align-items: center; }
.tray svg { width: 18px; display: block; }
.tray-end { width: 6px; height: 12px; background: #c8a840; border-radius: 6px 0 0 6px; }
```
